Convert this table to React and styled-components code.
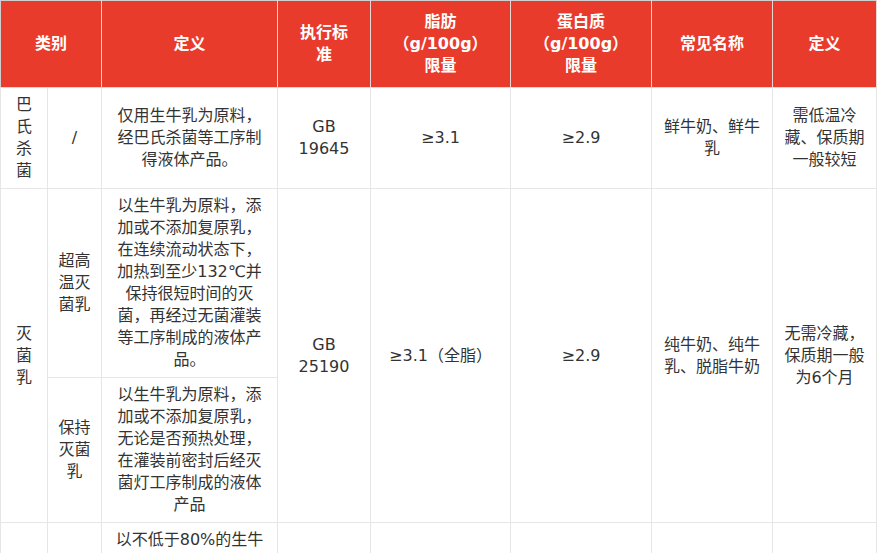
import React from 'react';
import styled, { createGlobalStyle } from 'styled-components';

const GlobalStyle = createGlobalStyle`
  html, body {
    margin: 0;
    padding: 0;
    background: #ffffff;
    overflow: hidden;
  }
  body {
    font-family: "DejaVu Sans", "Noto Sans CJK SC", sans-serif;
  }
`;

const Table = styled.table`
  width: 877px;
  table-layout: fixed;
  border-collapse: collapse;
  border-top: 1px solid #cfcfcf;
  font-size: 16px;
  line-height: 22px;
  color: #333333;
`;

const Th = styled.th`
  background-color: #e93b2c;
  color: #ffffff;
  font-weight: bold;
  padding: 10px 15px;
  text-align: center;
  vertical-align: middle;
  border: 1px solid #e7d6d4;
  border-top: 0;
  &:first-child {
    border-left: 1px solid #cfcfcf;
  }
`;

const Td = styled.td`
  padding: 6px 10px;
  text-align: center;
  vertical-align: middle;
  border: 1px solid #e6e6e6;
`;

const columns = [47, 54, 176, 93, 140, 141, 121, 104];

function App() {
  return (
    <>
      <GlobalStyle />
      <Table>
        <colgroup>
          {columns.map((w, i) => (
            <col key={i} style={{ width: w }} />
          ))}
        </colgroup>
        <thead>
          <tr>
            <Th colSpan={2}>类别</Th>
            <Th>定义</Th>
            <Th>执行标准</Th>
            <Th>脂肪（g/100g）限量</Th>
            <Th>蛋白质（g/100g）限量</Th>
            <Th>常见名称</Th>
            <Th>定义</Th>
          </tr>
        </thead>
        <tbody>
          <tr>
            <Td>巴氏杀菌</Td>
            <Td>/</Td>
            <Td>仅用生牛乳为原料，经巴氏杀菌等工序制得液体产品。</Td>
            <Td>GB 19645</Td>
            <Td>≥3.1</Td>
            <Td>≥2.9</Td>
            <Td>鲜牛奶、鲜牛乳</Td>
            <Td>需低温冷藏、保质期一般较短</Td>
          </tr>
          <tr>
            <Td rowSpan={2}>灭菌乳</Td>
            <Td>超高温灭菌乳</Td>
            <Td>
              以生牛乳为原料，添加或不添加复原乳，在连续流动状态下，加热到至少132℃并保持很短时间的灭菌，再经过无菌灌装等工序制成的液体产品。
            </Td>
            <Td rowSpan={2}>GB 25190</Td>
            <Td rowSpan={2}>≥3.1（全脂）</Td>
            <Td rowSpan={2}>≥2.9</Td>
            <Td rowSpan={2}>纯牛奶、纯牛乳、脱脂牛奶</Td>
            <Td rowSpan={2}>无需冷藏，保质期一般为6个月</Td>
          </tr>
          <tr>
            <Td>保持灭菌乳</Td>
            <Td>
              以生牛乳为原料，添加或不添加复原乳，无论是否预热处理，在灌装前密封后经灭菌灯工序制成的液体产品
            </Td>
          </tr>
          <tr>
            <Td>调制乳</Td>
            <Td>/</Td>
            <Td>
              以不低于80%的生牛（羊）乳或复原乳为主要原料，添加其他原料或食品添加剂或营养强化剂，采用适当的杀菌或灭菌等工艺制成的液体产品。
            </Td>
            <Td>GB 25191</Td>
            <Td>≥2.5</Td>
            <Td>≥2.3</Td>
            <Td>调味乳、花色奶、早餐奶</Td>
            <Td>根据杀菌方式确定</Td>
          </tr>
        </tbody>
      </Table>
    </>
  );
}

export default App;
